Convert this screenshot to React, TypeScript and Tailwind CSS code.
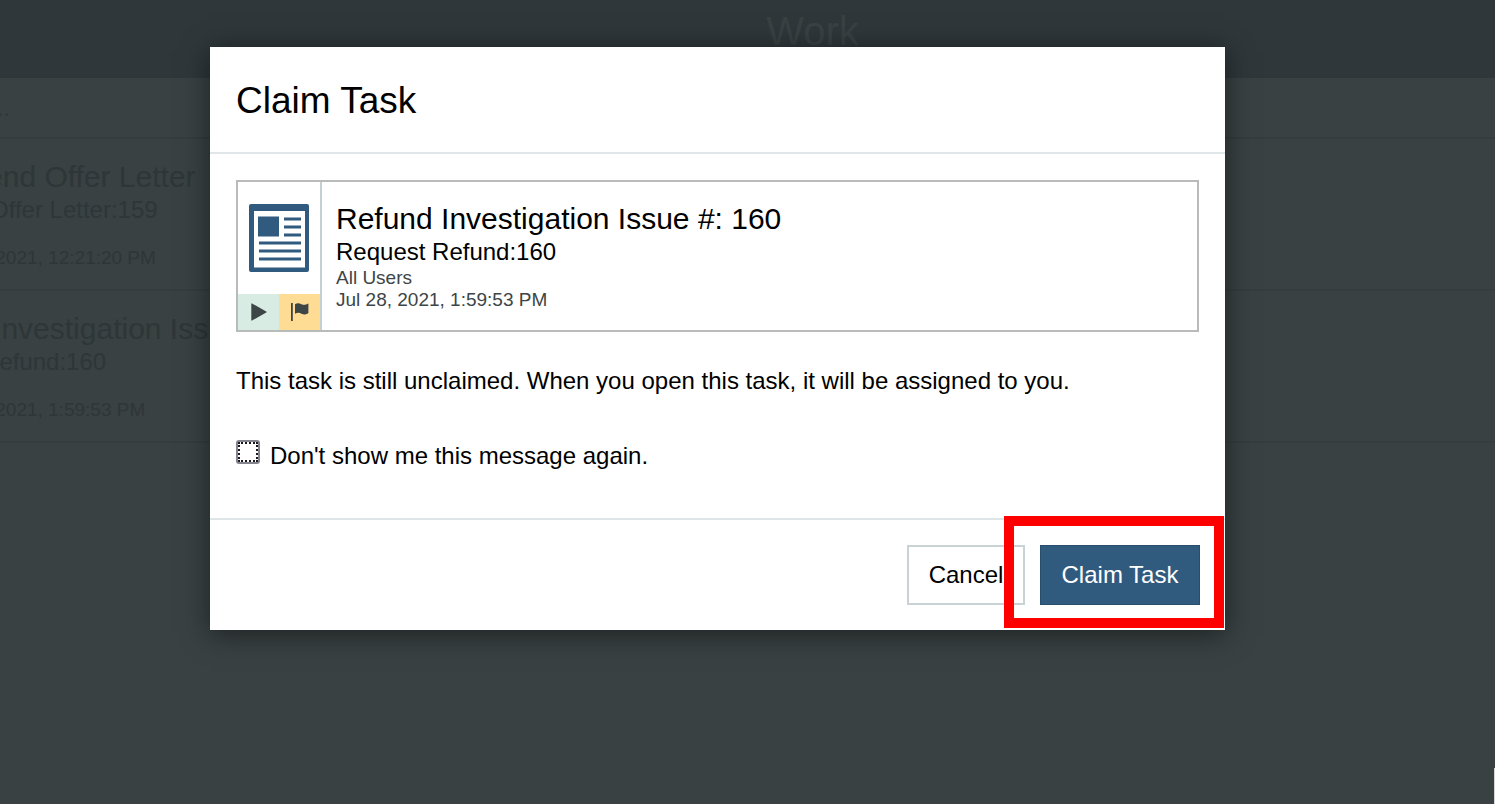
type Task = { title: string; subject: string; date: string };

const tasks: Task[] = [
  { title: "Send Offer Letter", subject: "Offer Letter:159", date: "Jul 28, 2021, 12:21:20 PM" },
  { title: "Refund Investigation Issue #: 160", subject: "Request Refund:160", date: "Jul 28, 2021, 1:59:53 PM" },
];

const shifts = [
  { title: "-ml-[34px]", subject: "-ml-[10px]", date: "-ml-[66px]" },
  { title: "-ml-[112px]", subject: "-ml-[114px]", date: "-ml-[66px]" },
];

function DocumentIcon() {
  return (
    <svg viewBox="0 0 60 68" className="h-[68px] w-[60px]" fill="#315b7e" aria-hidden="true">
      <path fillRule="evenodd" d="M2 0H58Q60 0 60 2V66Q60 68 58 68H2Q0 68 0 66V2Q0 0 2 0ZM5 7V63.500H56V7Z" />
      <rect x="9" y="12.500" width="21" height="20" />
      <path d="M35 13.500h17v3H35zM35 21.500h17v3H35zM35 29.500h17v3H35zM10 37.500h42v3H10zM10 45.500h42v3H10zM10 53.500h42v3H10z" />
    </svg>
  );
}

function PlayIcon() {
  return (
    <svg viewBox="0 0 16 18" className="h-[18px] w-4" fill="#3d4546" aria-hidden="true">
      <path d="M1 0.400Q0.300 0 0.300 1V17Q0.300 18 1 17.600L15.200 9.600Q16 9 15.200 8.400Z" />
    </svg>
  );
}

function FlagIcon() {
  return (
    <svg viewBox="0 0 18 18" className="size-[18px]" fill="#3d4546" aria-hidden="true">
      <path d="M0 0H1.800V18H0Z" />
      <path d="M4 1.200C6.500 -0.100 8.200 0.200 10.500 1.300C13 2.400 14.800 1.700 17.400 0.500V10C15 11.700 13 12 10.500 10.700C8.200 9.600 6.500 9.500 4 10.800Z" />
    </svg>
  );
}

export default function App() {
  return (
    <div className="relative min-h-screen overflow-hidden bg-white pr-[3px] font-['Liberation_Sans',Arial,sans-serif]">
      <div className="min-h-screen overflow-hidden bg-[#394142]">
        <header className="flex h-[78px] justify-center bg-[#2f373a] pl-[130px] pt-2">
          <h1 className="text-[40px] leading-[46px] text-[#394142]">Work</h1>
        </header>
        <div className="flex h-[61px] items-center border-b-2 border-[#343c3e] text-2xl text-[#30383a]">
          <span className="-ml-[10px]">...</span>
        </div>
        <ul>
          {tasks.map((task, i) => (
            <li key={task.title} className="h-[152px] whitespace-nowrap border-b-2 border-[#353d3f] pt-[21px] text-[#2e3638]">
              <p className={`text-[30px] leading-[34px] ${shifts[i].title}`}>{task.title}</p>
              <p className={`text-2xl leading-8 ${shifts[i].subject}`}>{task.subject}</p>
              <p className={`mt-5 text-[19px] leading-6 ${shifts[i].date}`}>{task.date}</p>
            </li>
          ))}
        </ul>
      </div>
      <div className="absolute bottom-0 right-[3px] h-9 w-px bg-[#d4d6d6]" />

      <div className="absolute inset-0 flex items-start justify-center pl-[210px] pr-[273px] pt-[47px]">
        <section
          role="dialog"
          aria-modal="true"
          aria-labelledby="dialog-title"
          className="relative w-full bg-white text-black shadow-[0_4px_26px_0_rgba(0,0,0,0.5)]"
        >
          <header className="border-b-2 border-[#e1e7e9] px-[26px] pb-[30px] pt-8">
            <h2 id="dialog-title" className="text-[37px] leading-[43px]">Claim Task</h2>
          </header>

          <div className="px-[26px] pb-[46px] pt-[26px]">
            <article className="flex h-[152px] border-2 border-[#b9bbbb]">
              <div className="flex w-[84px] flex-col border-r-2 border-[#c3cfd2]">
                <div className="flex flex-1 items-center justify-center">
                  <DocumentIcon />
                </div>
                <div className="flex h-9">
                  <span className="flex flex-1 items-center justify-center bg-[#d8ece3]"><PlayIcon /></span>
                  <span className="flex flex-1 items-center justify-center bg-[#ffdc94]"><FlagIcon /></span>
                </div>
              </div>
              <div className="px-[14px] pt-5">
                <h3 className="text-[30px] leading-[34px]">Refund Investigation Issue #: 160</h3>
                <p className="text-2xl leading-[31px]">Request Refund:160</p>
                <p className="text-[19px] leading-[22px] text-[#3d4546]">All Users</p>
                <p className="text-[19px] leading-[22px] text-[#3d4546]">Jul 28, 2021, 1:59:53 PM</p>
              </div>
            </article>

            <p className="mt-[33px] text-2xl leading-8">
              This task is still unclaimed. When you open this task, it will be assigned to you.
            </p>
            <div className="mt-[43px] flex items-start">
              <input
                id="hide-message"
                type="checkbox"
                className="size-6 appearance-none rounded-[3px] border-2 border-[#85858f] bg-white outline-2 -outline-offset-4 outline-dotted outline-[#18181c]"
              />
              <label htmlFor="hide-message" className="pl-[10px] text-2xl leading-8">
                Don't show me this message again.
              </label>
            </div>
          </div>

          <footer className="flex justify-end gap-[15px] border-t-2 border-[#dde5e7] py-[25px] pl-[26px] pr-[25px]">
            <button type="button" className="h-[60px] w-[118px] border-2 border-[#c9d2d4] bg-white text-2xl">Cancel</button>
            <button type="button" className="h-[60px] w-[160px] border border-[#294d6c] bg-[#315b7e] text-2xl text-white">Claim Task</button>
          </footer>
          <div className="pointer-events-none absolute bottom-[2px] right-px h-28 w-[220px] border-10 border-[#ff0000]" />
        </section>
      </div>
    </div>
  );
}
